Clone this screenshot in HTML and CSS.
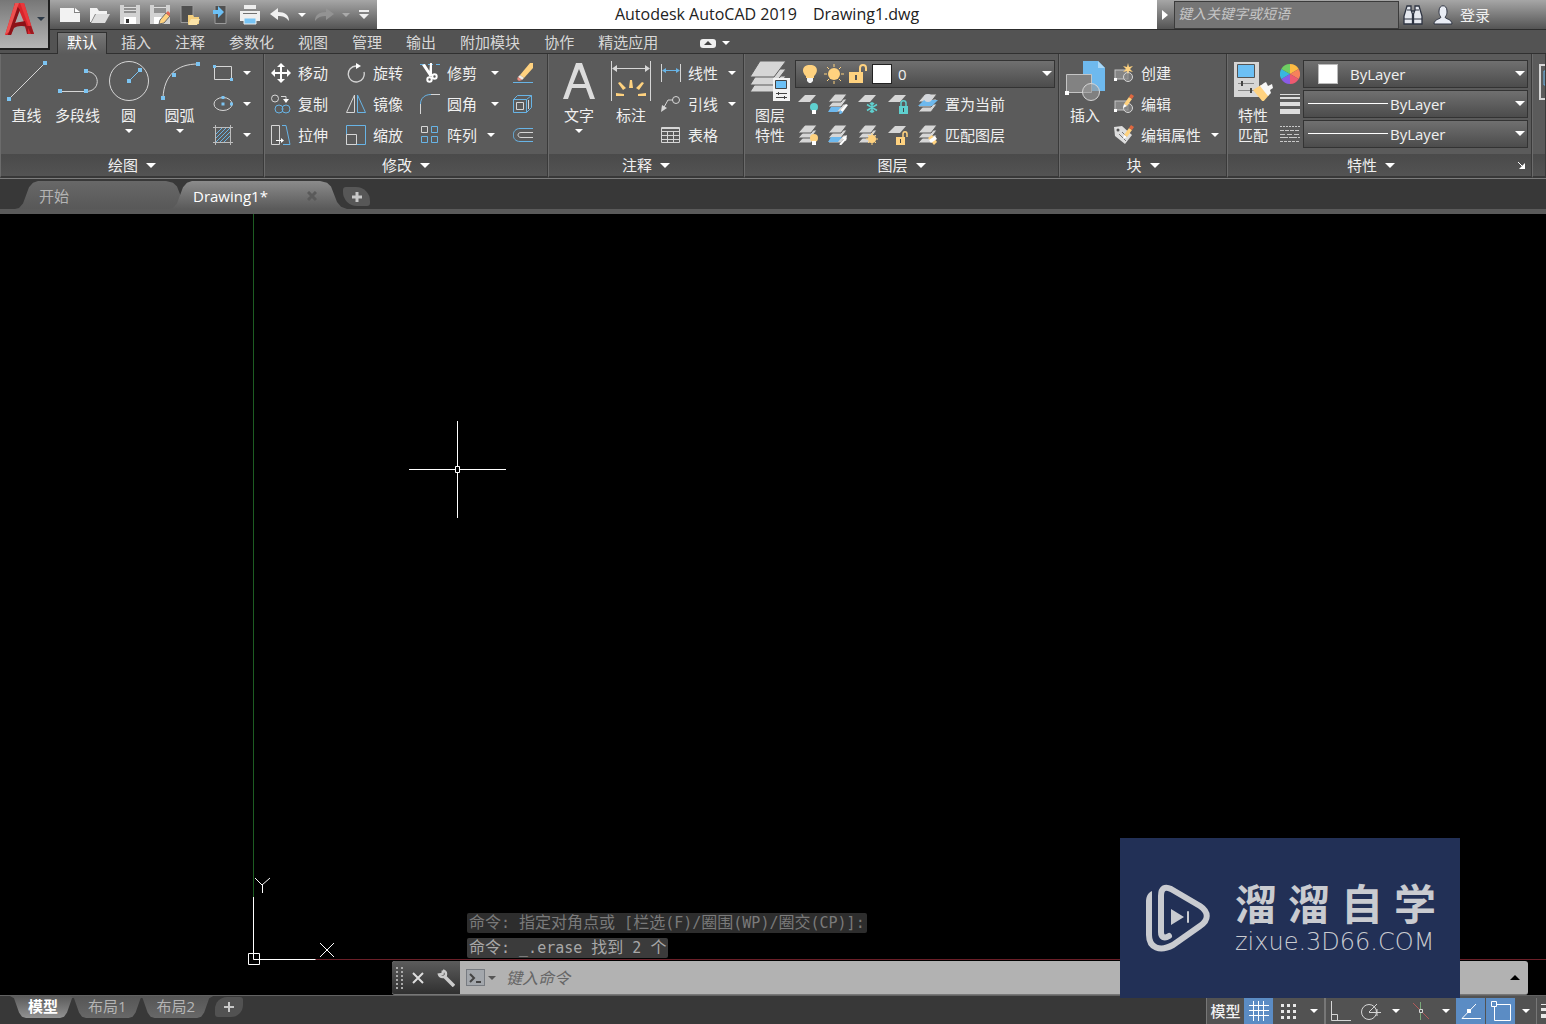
FILE: index.html
```html
<!DOCTYPE html>
<html lang="zh-CN">
<head>
  <meta charset="UTF-8" />
  <meta name="viewport" content="width=device-width, initial-scale=1.0"/>
  <title>Autodesk AutoCAD 2019 Drawing1.dwg</title>
  <link rel="stylesheet" href="styles.css">
</head>
<body>
  <svg class="symbols" aria-hidden="true">
    <symbol id="sheet" viewBox="0 0 20 20"><path fill="#d6d6d6" d="M7 1h11l-6 7H0z"/></symbol>
    <symbol id="stack" viewBox="0 0 20 20">
      <g fill="#d6d6d6" stroke="#5b5b5b"><path d="M7 10h12l-6 8H0z"/><path d="M7 5h12l-6 8H0z"/><path d="M7 0h12l-6 8H0z"/></g>
    </symbol>
    <symbol id="block" viewBox="0 0 20 20">
      <rect x="1" y="7" width="13" height="9" fill="#858585" stroke="#c4c4c4"/><circle cx="14" cy="14" r="4.5" fill="#858585" fill-opacity=".7" stroke="#d6d6d6"/><path fill="#fff" d="M0 15h3v3H0z"/>
    </symbol>
    <symbol id="pencil" viewBox="0 0 20 20">
      <path fill="#ffd27f" d="M10 10l5-7 3 2-5 7z"/><path fill="#e0673f" d="M15 3l2-3 3 2-2 3z"/><path fill="#fff" d="M10 10l3 2-4 2z"/>
    </symbol>
  </svg>

  <header class="header">
    <button class="app-menu" aria-label="应用程序菜单">
      <svg width="34" height="36" viewBox="0 0 34 36">
        <path fill="#d8232a" d="M12 2h9l10 31h-6l-3-8H11l-3 9H2z"/>
        <path fill="#a9a9a9" d="M16 9l5 12-9 1z"/>
        <path fill="#8d1218" d="M12 2l5 7-5 13 10-2 2 6c-6-2-10-1-13 1l-3 7H5z"/>
        <path fill="#ee5150" d="M12 2h4L6 31l-4 3z"/>
        <path fill="#e8383c" d="M17 2h4l7 22-2 2z"/>
        <path fill="#9c1a20" d="M22 25l6 0 3 8h-3l-3-6v6h-1z"/>
      </svg>
      <span class="caret caret-navy"></span>
    </button>

    <div class="titlebar">
      <div class="quick-access">
        <button aria-label="新建"><svg width="20" height="20"><path fill="#f2f2f2" d="M0 3h14v5h6v9H0z"/><path fill="#fff" d="M15 3l5 4h-5z"/></svg></button>
        <button aria-label="打开"><svg width="20" height="20"><path fill="#f2f2f2" d="M0 3h7l2 3h8v3H5L1 17H0z"/><path fill="#ddd" d="M6 9h14l-5 9H1z"/></svg></button>
        <button aria-label="保存"><svg width="20" height="20"><path fill="#d2d2d2" d="M0 0h20v19H0z"/><path fill="#909090" d="M4 0h12v8H4z"/><path fill="#fff" d="M4 12h12v7H4z"/><path fill="#333" d="M6 14h3v4H6z"/><path fill="#ddd" d="M4 2h12v1H4zM4 5h12v1H4z"/></svg></button>
        <button aria-label="另存为"><svg width="20" height="20"><path fill="#d2d2d2" d="M0 0h20v19H0z"/><path fill="#909090" d="M4 0h12v8H4z"/><path fill="#fff" d="M4 12h9v7H4z"/><path fill="#ddd" d="M4 2h12v1H4z"/><path fill="#ffd27f" stroke="#6a6a6a" d="M10 15l6-7 4 3-6 7-5 1z"/><path fill="#e56b54" d="M16 8l2-2 3 3-2 2z"/></svg></button>
        <button aria-label="从移动设备打开"><svg width="20" height="20"><path fill="#505050" stroke="#9b9b9b" d="M1 .5h12v17H1z"/><path fill="#f4cf7d" d="M8 10h5l1 2h5v7H8z"/><path fill="#fbe3a8" d="M11 14h9l-3 6H8z"/></svg></button>
        <button aria-label="保存到移动设备"><svg width="20" height="20"><path fill="#505050" stroke="#9b9b9b" d="M5 .5h11v18H5z"/><path fill="#6cc0f5" d="M3 5h5V1l6 6-6 6V9H3z"/></svg></button>
        <button aria-label="打印"><svg width="20" height="20"><path fill="#eee" d="M4 0h12v4H4zM0 6h20v10H0z"/><path fill="#707070" d="M3 8h14v1H3z"/><path fill="#77c4f5" stroke="#eee" d="M4 13h12v6H4z"/></svg></button>
        <button aria-label="放弃"><svg width="20" height="20"><path fill="#f0f0f0" d="M0 9l8-6v4c7 0 11 3 11 9-3-4-6-5-11-5v4z"/></svg></button>
        <button class="qa-caret" aria-label="放弃列表"><span class="caret"></span></button>
        <button aria-label="重做"><svg width="20" height="20"><path fill="#939393" d="M20 9l-8-6v4C5 7 1 10 1 16c3-4 6-5 11-5v4z"/></svg></button>
        <button class="qa-caret" aria-label="重做列表"><span class="caret caret-dim"></span></button>
        <button aria-label="自定义快速访问工具栏"><svg width="12" height="12"><path fill="#eee" d="M1 1h10v2H1zM1 5h10l-5 5z"/></svg></button>
      </div>
      <div class="doc-title"><span>Autodesk AutoCAD 2019</span><span>Drawing1.dwg</span></div>
      <form class="infocenter">
        <button type="button" class="collapse" aria-label="折叠"><svg width="6" height="10"><path fill="#fff" d="M0 0l6 5-6 5z"/></svg></button>
        <input type="text" aria-label="搜索" placeholder="键入关键字或短语">
        <button type="button" aria-label="查找"><svg width="20" height="20"><g fill="#e6e9f0" stroke="#2e3442" stroke-width="1.3"><path d="M8 6h4v5H8z"/><path d="M4 1h4v4l1.500 4v10H1V11zM16 1h-4v4l-1.500 4v10H19V11z"/></g><path stroke="#2e3442" d="M1 14h8M11 14h8M4 5h4M12 5h4"/></svg></button>
        <button type="button" class="signin"><svg width="20" height="20"><path fill="#e9edf5" stroke="#2e3442" d="M6 6c0-7 8-7 8 0 0 4-1 5-2 6 0 2 7 2 7 7H1c0-5 7-5 7-7-1-1-2-2-2-6z"/></svg>登录</button>
      </form>
    </div>

    <nav class="ribbon-tabs">
      <a href="#" class="active">默认</a>
      <a href="#">插入</a>
      <a href="#">注释</a>
      <a href="#">参数化</a>
      <a href="#">视图</a>
      <a href="#">管理</a>
      <a href="#">输出</a>
      <a href="#">附加模块</a>
      <a href="#">协作</a>
      <a href="#">精选应用</a>
      <button class="minimize" aria-label="最小化功能区"><svg width="16" height="9"><rect width="16" height="9" rx="3" fill="#eee"/><path fill="#444" d="M8 2l4 4H4z"/></svg><span class="caret"></span></button>
    </nav>
  </header>

  <main class="ribbon">
    <section class="panel panel-draw">
      <div class="panel-body">
        <button class="tool-large"><svg width="40" height="40"><path stroke="#d6d6d6" d="M2 38L38 2"/><path fill="#7cc4f2" d="M0 36h4v4H0zM36 0h4v4h-4z"/></svg>直线</button>
        <button class="tool-large"><svg width="40" height="40"><path fill="none" stroke="#d6d6d6" d="M2 30.500h26c15 0 15-20 0-20"/><path fill="#7cc4f2" d="M0 28h4v4H0zM26 28h4v4h-4zM26 8h4v4h-4z"/></svg>多段线</button>
        <button class="tool-large"><svg width="40" height="40"><circle cx="20" cy="20" r="19.500" fill="none" stroke="#d6d6d6"/><path stroke="#7cc4f2" d="M20 20L31 9"/><path fill="#7cc4f2" d="M18 18h4v4h-4zM29 7h4v4h-4z"/></svg>圆<span class="caret"></span></button>
        <button class="tool-large"><svg width="40" height="40"><path fill="none" stroke="#d6d6d6" d="M3 37C4 14 17 3 38 3"/><path fill="#7cc4f2" d="M1 35h4v4H1zM12 12h4v4h-4zM36 1h4v4h-4z"/></svg>圆弧<span class="caret"></span></button>
        <div class="tool-list">
          <div class="split"><button class="tool" aria-label="矩形"><svg width="20" height="20"><path fill="none" stroke="#d6d6d6" d="M1.500 3.500h17v13h-17z"/><path fill="#7cc4f2" d="M0 2h3v3H0zM17 15h3v3h-3z"/></svg></button><button class="more" aria-label="矩形选项"><span class="caret"></span></button></div>
          <div class="split"><button class="tool" aria-label="椭圆"><svg width="20" height="20"><ellipse cx="10" cy="10" rx="9" ry="6.500" fill="none" stroke="#d6d6d6"/><path fill="#7cc4f2" d="M8.500 2h3v3h-3zM8.500 8.500h3v3h-3zM17 8.500h3v3h-3z"/></svg></button><button class="more" aria-label="椭圆选项"><span class="caret"></span></button></div>
          <div class="split"><button class="tool" aria-label="图案填充"><svg width="20" height="20"><path stroke="#68b4e6" d="M3 9l6-6M3 13L13 3M3 17L17 3M7 17L17 7M11 17l6-6"/><path fill="none" stroke="#bdbdbd" d="M0 2.500h20M0 17.500h20M2.500 0v20M17.500 0v20"/></svg></button><button class="more" aria-label="图案填充选项"><span class="caret"></span></button></div>
        </div>
      </div>
      <button class="panel-title">绘图<span class="caret caret-big"></span></button>
    </section>

    <section class="panel panel-modify">
      <div class="panel-body">
        <div class="tool-list">
          <button class="tool"><svg width="20" height="20"><path fill="#fff" d="M10 0l4 4h-3v5h5V6l4 4-4 4v-3h-5v5h3l-4 4-4-4h3v-5H4v3l-4-4 4-4v3h5V4H6z"/></svg>移动</button>
          <button class="tool"><svg width="20" height="20"><g fill="none" stroke="#d6d6d6"><circle cx="4" cy="4.500" r="3.500"/><path d="M10 2.500h5V6"/></g><path fill="#fff" d="M12 5h6l-3 4z"/><g fill="none" stroke="#68b4e6"><circle cx="8" cy="15" r="4"/><circle cx="15" cy="15" r="4"/></g></svg>复制</button>
          <button class="tool"><svg width="20" height="20"><path fill="none" stroke="#d6d6d6" d="M.5.5h8v19h-8z"/><path fill="none" stroke="#68b4e6" d="M11 .5h4l4 19h-7"/><path stroke="#fff" d="M5 15.500h6"/><path fill="#fff" d="M10 13l3 2.500-3 2.500z"/></svg>拉伸</button>
        </div>
        <div class="tool-list">
          <button class="tool"><svg width="20" height="20"><path fill="none" stroke="#d6d6d6" stroke-width="1.300" d="M10 3a8 8 0 1 0 8 6"/><path fill="#fff" d="M10 0l5 3-5 3z"/></svg>旋转</button>
          <button class="tool"><svg width="20" height="20"><path fill="none" stroke="#d6d6d6" d="M8.500 1v17.500h-8z"/><path fill="none" stroke="#68b4e6" d="M11.500 1v17.500h8z"/></svg>镜像</button>
          <button class="tool"><svg width="20" height="20"><path fill="none" stroke="#68b4e6" d="M.5.5h19v19H.5z"/><path fill="#5b5b5b" stroke="#d6d6d6" d="M.5 9.500h10v10H.5z"/></svg>缩放</button>
        </div>
        <div class="tool-list">
          <div class="split split-wide"><button class="tool"><svg width="20" height="20"><path stroke="#68b4e6" stroke-dasharray="5 3" d="M0 1.500h20"/><path fill="#fff" d="M2 2l3-1 7 11-2 2zM10 0h2v13h-3z"/><g fill="none" stroke="#fff" stroke-width="2"><circle cx="9.500" cy="16.500" r="2.200"/><circle cx="14.500" cy="13.500" r="2.200"/></g></svg>修剪</button><button class="more" aria-label="修剪选项"><span class="caret"></span></button></div>
          <div class="split split-wide"><button class="tool"><svg width="20" height="20"><path fill="none" stroke="#68b4e6" d="M.5 10C.5 4 5 .5 11 .5"/><path stroke="#d6d6d6" d="M.5 10v10M11 .5h9"/></svg>圆角</button><button class="more" aria-label="圆角选项"><span class="caret"></span></button></div>
          <div class="split"><button class="tool"><svg width="20" height="20"><g fill="none" stroke="#68b4e6"><path d="M11.500 1.500h6v6h-6zM1.500 11.500h6v6h-6zM11.500 11.500h6v6h-6z"/><path stroke="#d6d6d6" d="M1.500 1.500h6v6h-6z"/></g></svg>阵列</button><button class="more" aria-label="阵列选项"><span class="caret"></span></button></div>
        </div>
        <div class="tool-list">
          <button class="tool" aria-label="删除"><svg width="20" height="20"><path stroke="#68b4e6" d="M0 19.500h20"/><path fill="#ffd27f" d="M7 12L17 0h3v5l-9 10z"/><path fill="#f4efe6" d="M7 12l4 3-2 2-4-3z"/><path fill="#f08d80" d="M5 14l4 3c-3 2-6 0-4-3z"/></svg></button>
          <button class="tool" aria-label="分解"><svg width="20" height="20"><g fill="none" stroke="#68b4e6"><path d="M.5 5.500h13v13H.5zM.5 5.500l4-4h14l-5 4M18.500 1.500v12l-5 5"/><path stroke="#d6d6d6" d="M3.500 8.500h7v7h-7zM15.500 6v9"/></g></svg></button>
          <button class="tool" aria-label="偏移"><svg width="20" height="20"><path fill="none" stroke="#68b4e6" d="M20 3.500H7c-9 0-9 13 0 13h13"/><path fill="none" stroke="#d6d6d6" d="M20 7.500H8c-4 0-4 5 0 5h12"/></svg></button>
        </div>
      </div>
      <button class="panel-title">修改<span class="caret caret-big"></span></button>
    </section>

    <section class="panel panel-annotate">
      <div class="panel-body">
        <button class="tool-large"><svg width="40" height="40"><path fill="#dcdcdc" d="M17 2h6l13 36h-5l-4-11H13L9 38H4zM20 8l-6 15h12z"/></svg>文字<span class="caret"></span></button>
        <button class="tool-large"><svg width="40" height="40"><path stroke="#d6d6d6" d="M.5 0v40M39.500 0v40M2 7.500h36"/><path fill="#d6d6d6" d="M1 7.500L6 4v7zM39 7.500L34 4v7z"/><path fill="#ffd27f" d="M18 27l1-8h2l1 8zM12 29l-5-7 2-1 6 6zM28 29l5-7-2-1-6 6zM13 35H5v-3l8 1zM27 35h8v-3l-8 1z"/></svg>标注</button>
        <div class="tool-list">
          <div class="split"><button class="tool"><svg width="20" height="20"><path stroke="#d6d6d6" d="M.5 1v18M19.500 1v18"/><path stroke="#68b4e6" d="M2 7.500h16"/><path fill="#68b4e6" d="M1 7.500L5 5v5zM19 7.500L15 5v5z"/></svg>线性</button><button class="more" aria-label="线性选项"><span class="caret"></span></button></div>
          <div class="split"><button class="tool"><svg width="20" height="20"><path fill="none" stroke="#d6d6d6" d="M2 15l5-9h5"/><circle cx="15" cy="6" r="3.500" fill="none" stroke="#d6d6d6"/><path fill="#d6d6d6" d="M0 18l1-7 5 3z"/></svg>引线</button><button class="more" aria-label="引线选项"><span class="caret"></span></button></div>
          <button class="tool"><svg width="20" height="20"><path fill="none" stroke="#d6d6d6" d="M.5 2.500h18v15H.5zM0 3.500h19M0 6.500h19M0 10.500h19M0 14.500h19M6.500 6v11M12.500 6v11"/></svg>表格</button>
        </div>
      </div>
      <button class="panel-title">注释<span class="caret caret-big"></span></button>
    </section>

    <section class="panel panel-layers">
      <div class="panel-body">
        <button class="tool-large"><svg width="40" height="40"><g fill="#d6d6d6" stroke="#5b5b5b"><path d="M10 15h26L24 31H0z"/><path d="M10 8h26L24 24H0z"/><path d="M10 0h26L24 16H0z"/></g><path fill="#f2f2f2" d="M23 17h17v23H23z"/><path fill="#6cc0f5" stroke="#444" d="M25.500 19.500h11v8h-11z"/><path stroke="#444" d="M26 32.500h11M26 36.500h11M28.500 31v3M34.500 35v3"/></svg><span>图层<br>特性</span></button>
        <div class="layer-tools">
          <div class="combo combo-layer">
            <select id="layer" aria-label="图层"><option>0</option></select>
            <span class="layer-state">
              <svg width="20" height="20"><path fill="#ffd27f" d="M10 1c9 0 8 8 4 11v2H6v-2C2 9 1 1 10 1z"/><path fill="#f4f4f4" d="M7 14h6v3l-2 2H9l-2-2z"/></svg>
              <svg width="20" height="20"><circle cx="10" cy="10" r="6" fill="#ffd27f"/><path stroke="#ffd27f" d="M10 0v3M10 17v3M0 10h3M17 10h3M3 3l2 2M15 15l2 2M3 17l2-2M15 5l2-2"/></svg>
              <svg width="20" height="20"><path fill="#ffd27f" d="M1 8h14v11H1z"/><path fill="none" stroke="#ffd27f" stroke-width="2" d="M12 9V4c0-4 6-4 6 0v3"/><path fill="#555" d="M7 11h2v5H7z"/></svg>
              <span class="swatch"></span>
            </span>
          </div>
          <div class="layer-row">
            <button class="tool" aria-label="关"><svg width="20" height="20"><use href="#sheet"/><circle cx="16" cy="13" r="4" fill="#5fd0cf"/><path fill="#fff" d="M14 16h4v4h-4z"/></svg></button>
            <button class="tool" aria-label="隔离"><svg width="20" height="20"><use href="#stack"/><path fill="#6eb9ee" d="M3 13h10l-4 5H0z"/><path fill="#fff" d="M18 10l2 1-6 8-2-2z"/><path fill="#6eb9ee" d="M12 16l3 2-2 2h-2z"/></svg></button>
            <button class="tool" aria-label="冻结"><svg width="20" height="20"><use href="#sheet"/><path stroke="#5fd0cf" fill="none" stroke-width="1.500" d="M14 8v11M9 10.500l10 6M9 16.500l10-6M12 9l2 2 2-2M12 18l2-2 2 2"/></svg></button>
            <button class="tool" aria-label="锁定"><svg width="20" height="20"><use href="#sheet"/><path fill="#5fd0cf" d="M11 12h9v8h-9z"/><path fill="none" stroke="#5fd0cf" stroke-width="1.500" d="M13 12V9c0-3 5-3 5 0v3"/><path fill="#444" d="M15 14h1v4h-1z"/></svg></button>
            <button class="tool"><svg width="20" height="20"><use href="#stack"/><path fill="#6eb9ee" d="M6 6h14l-6 6H0z"/><circle cx="10" cy="4" r="4" fill="#d4d7dc"/></svg>置为当前</button>
          </div>
          <div class="layer-row">
            <button class="tool" aria-label="打开所有图层"><svg width="20" height="20"><use href="#stack"/><circle cx="16" cy="13" r="4" fill="#ffd27f"/><path fill="#fff" d="M14 16h4v4h-4z"/></svg></button>
            <button class="tool" aria-label="取消隔离"><svg width="20" height="20"><use href="#stack"/><path fill="#6eb9ee" d="M3 12h11l-4 5H0z"/><path stroke="#fff" stroke-width="2" d="M12 20l6-7"/><path fill="#fff" d="M19 10l-1 6-4-3z"/></svg></button>
            <button class="tool" aria-label="解冻所有图层"><svg width="20" height="20"><use href="#stack"/><circle cx="14" cy="14" r="4" fill="#ffd27f"/><path stroke="#ffd27f" d="M14 8v12M8 14h12M10 10l8 8M10 18l8-8"/></svg></button>
            <button class="tool" aria-label="解锁"><svg width="20" height="20"><use href="#sheet"/><path fill="#ffd27f" d="M8 12h9v8H8z"/><path fill="none" stroke="#ffd27f" stroke-width="1.500" d="M15 12V9c0-3 4-3 4 0v3"/><path fill="#444" d="M12 14h1v4h-1z"/></svg></button>
            <button class="tool"><svg width="20" height="20"><use href="#stack"/><path fill="#ffd27f" d="M10 13l4-3 5 7-3 3z"/><path fill="#fff" d="M11 15l6-4 2 3-6 4z"/></svg>匹配图层</button>
          </div>
        </div>
      </div>
      <button class="panel-title">图层<span class="caret caret-big"></span></button>
    </section>

    <section class="panel panel-block">
      <div class="panel-body">
        <button class="tool-large"><svg width="40" height="40"><path fill="#6eb9ee" d="M18 0h15l7 7v23H18z"/><path fill="#a9d8f7" d="M33 0v7h7z"/><path fill="#828282" stroke="#c4c4c4" d="M1.500 13.500h25v18h-25z"/><circle cx="26" cy="31" r="8.500" fill="#999" fill-opacity=".6" stroke="#d6d6d6"/><path fill="#fff" d="M0 30h4v4H0z"/></svg>插入</button>
        <div class="tool-list">
          <button class="tool"><svg width="20" height="20"><use href="#block"/><path fill="#ffd27f" d="M14 0l1 4 4-1-3 3 3 3-4-1-1 3-1-3-4 1 3-3-3-3 4 1z"/></svg>创建</button>
          <button class="tool"><svg width="20" height="20"><use href="#block"/><use href="#pencil"/></svg>编辑</button>
          <div class="split"><button class="tool"><svg width="20" height="20"><path fill="#dedede" d="M0 2l8-1 10 9-7 9L1 11z"/><path stroke="#777" d="M5 9l7 7M8 7l5 5"/><circle cx="4" cy="5" r="1.500" fill="#555"/><use href="#pencil"/></svg>编辑属性</button><button class="more" aria-label="编辑属性选项"><span class="caret"></span></button></div>
        </div>
      </div>
      <button class="panel-title">块<span class="caret caret-big"></span></button>
    </section>

    <section class="panel panel-props">
      <div class="panel-body">
        <button class="tool-large"><svg width="40" height="40"><path fill="#d6d6d6" d="M1 1h25v35H1z"/><path fill="#6cc0f5" stroke="#555" d="M4.500 3.500h17v13h-17z"/><path stroke="#888" d="M5 22.500h16M5 29.500h16"/><path fill="#444" d="M8 20h2v5H8zM17 27h2v5h-2z"/><path fill="#ffd27f" d="M20 29l8-5 8 10-6 7z"/><path fill="#f6f6f6" d="M27 25l4-3 2-1 2 4 4-2 1 4-3 2 1 3-3 3z"/></svg><span>特性<br>匹配</span></button>
        <div class="props-grid">
          <label for="color" aria-label="对象颜色"><svg width="20" height="20" viewBox="-10 -10 20 20"><path fill="#fdbb43" d="M0 0V-10A10 10 0 0 1 8.700-5z"/><path fill="#f7825b" d="M0 0L8.700-5A10 10 0 0 1 8.700 5z"/><path fill="#ee5a70" d="M0 0L8.700 5A10 10 0 0 1 0 10z"/><path fill="#8a5be8" d="M0 0V10A10 10 0 0 1-8.700 5z"/><path fill="#38b7e0" d="M0 0L-8.700 5A10 10 0 0 1-8.700-5z"/><path fill="#6fce62" d="M0 0L-8.700-5A10 10 0 0 1 0-10z"/></svg></label>
          <div class="combo combo-color">
            <select id="color"><option>ByLayer</option></select>
            <span class="swatch"></span>
          </div>
          <label for="weight" aria-label="线宽"><svg width="20" height="20"><path fill="#dcdcdc" d="M0 0h20v1H0zM0 3h20v2H0zM0 8h20v4H0zM0 15h20v5H0z"/></svg></label>
          <div class="combo combo-line">
            <select id="weight"><option>ByLayer</option></select>
            <span class="line-sample"></span>
          </div>
          <label for="linetype" aria-label="线型"><svg width="20" height="20"><g stroke="#c9c9c9"><path stroke-dasharray="2 1" d="M0 2.500h20"/><path stroke-dasharray="4 1" d="M0 6.500h20"/><path stroke-dasharray="5 2" d="M0 10.500h20"/><path stroke-dasharray="8 1" d="M0 13.500h20"/><path stroke-dasharray="3 1" d="M0 17.500h20"/></g></svg></label>
          <div class="combo combo-line">
            <select id="linetype"><option>ByLayer</option></select>
            <span class="line-sample"></span>
          </div>
        </div>
      </div>
      <div class="panel-foot">
        <button class="panel-title">特性<span class="caret caret-big"></span></button>
        <button class="launcher" aria-label="特性设置"><svg width="7" height="7"><path stroke="#fff" d="M0 0l5 5"/><path fill="#fff" d="M7 1v6H1z"/></svg></button>
      </div>
    </section>

    <section class="panel panel-group">
      <div class="panel-body">
        <button class="tool-large" aria-label="组"><svg width="40" height="40"><path fill="none" stroke="#d6d6d6" stroke-width="2" d="M10 4H1v34h9"/><path fill="#686868" stroke="#68b4e6" d="M5 10h20v14H5z"/></svg></button>
      </div>
      <div class="panel-title"></div>
    </section>
  </main>

  <div class="file-tabs">
    <button class="file-tab">开始</button>
    <button class="file-tab active">Drawing1*<svg width="10" height="10"><path stroke="#5a5a5a" stroke-width="3" d="M1 1l8 8M9 1L1 9"/></svg></button>
    <button class="add-tab" aria-label="新图形"><svg width="12" height="12"><path stroke="#c8c8c8" stroke-width="3" d="M6 1v10M1 6h10"/></svg></button>
  </div>

  <div class="canvas">
    <div class="axis-y"></div>
    <div class="axis-x"></div>
    <svg class="crosshair" width="97" height="97"><path stroke="#fff" d="M48.500 0v45M48.500 52v45M0 48.500h46M51 48.500h46"/><path fill="none" stroke="#fff" d="M46.500 45.500h4v6h-4z"/></svg>
    <svg class="ucs" width="90" height="90"><g fill="none" stroke="#fff"><path d="M.5 76.500h11v11H.5zM5.500 20v62.500h62"/><path d="M7 1l7 7 8-7M14.500 8v8M72 66l14 14M86 66L72 80"/></g></svg>

    <div class="command">
      <p class="history history-old"><span>命令</span>: <span>指定对角点或</span> [<span>栏选</span>(F)/<span>圈围</span>(WP)/<span>圈交</span>(CP)]:</p>
      <p class="history"><span>命令</span>: _.erase <span>找到</span> 2 <span>个</span></p>
      <div class="command-line">
        <div class="command-tools">
          <svg width="8" height="22"><path stroke="#aaa" stroke-width="2" stroke-dasharray="2 2" d="M1 0v22M6 0v22"/></svg>
          <button aria-label="关闭"><svg width="12" height="12"><path stroke="#ddd" stroke-width="2" d="M1 1l10 10M11 1L1 11"/></svg></button>
          <button class="customize" aria-label="自定义"><svg width="18" height="18"><path fill="none" stroke="#ccc" stroke-width="3.500" d="M7 7l10 10"/><path fill="none" stroke="#ccc" stroke-width="2.500" d="M6 1.500L5.500 5 2 5.500C3 9 9 9 9 5 9 3 8 2 6 1.500"/></svg></button>
        </div>
        <button class="prompt" aria-label="最近使用的命令"><svg width="19" height="17"><rect x=".5" y=".5" width="18" height="16" fill="#a3a7ac" stroke="#777b81"/><path fill="none" stroke="#444" stroke-width="2" d="M4 5l4 4-4 4M10 13h5"/></svg><span class="caret caret-dark"></span></button>
        <input type="text" aria-label="命令" placeholder="键入命令">
        <button class="expand" aria-label="展开历史"><svg width="10" height="5"><path d="M5 0l5 5H0z"/></svg></button>
      </div>
    </div>
  </div>

  <footer class="status">
    <div class="layout-tabs">
      <button class="layout-tab active">模型</button>
      <button class="layout-tab">布局1</button>
      <button class="layout-tab">布局2</button>
      <button class="add-layout" aria-label="新建布局"><svg width="10" height="10"><path stroke="#c8c8c8" stroke-width="2" d="M5 0v10M0 5h10"/></svg></button>
    </div>
    <div class="status-tools">
      <button class="space">模型</button>
      <button class="on" aria-label="栅格"><svg width="20" height="20"><path stroke="#fff" d="M0 4.500h20M0 9.500h20M0 14.500h20M4.500 0v20M9.500 0v20M14.500 0v20"/></svg></button>
      <button aria-label="捕捉"><svg width="20" height="20"><g stroke="#e8e8e8" stroke-width="3" stroke-dasharray="3 3"><path d="M2 4.500h15M2 10.500h15M2 16.500h15"/></g></svg></button>
      <button class="arrow" aria-label="捕捉设置"><span class="caret"></span></button>
      <span class="divider"></span>
      <button aria-label="正交"><svg width="20" height="20"><path fill="none" stroke="#d6d6d6" d="M.5 0v19.500H20M.5 13.500h6v6"/></svg></button>
      <button aria-label="极轴"><svg width="20" height="20"><circle cx="8" cy="11" r="7.500" fill="none" stroke="#d6d6d6"/><path stroke="#d6d6d6" d="M8 11.500h12M8 11l8-8M16 8v7"/></svg></button>
      <button class="arrow" aria-label="极轴设置"><span class="caret"></span></button>
      <button aria-label="等轴测"><svg width="20" height="20"><path stroke="#b25a5a" d="M2 2l16 16"/><path stroke="#79a879" d="M9.500 1v18"/><path fill="#525252" stroke="#d6d6d6" d="M8.500 8.500h3v3h-3z"/></svg></button>
      <button class="arrow" aria-label="等轴测设置"><span class="caret"></span></button>
      <button class="on" aria-label="对象捕捉追踪"><svg width="20" height="20"><path fill="none" stroke="#fff" d="M15 3L1 17.500h19"/><path fill="#fff" d="M6 8h4v4H6z"/></svg></button>
      <button class="on" aria-label="对象捕捉"><svg width="20" height="20"><path fill="none" stroke="#fff" d="M3.500 3.500h16v16h-16z"/><path fill="#5b8cc4" stroke="#fff" d="M.5.5h5v5h-5z"/></svg></button>
      <button class="arrow" aria-label="对象捕捉设置"><span class="caret"></span></button>
      <button class="lineweight" aria-label="线宽显示"><svg width="6" height="16"><path fill="#e8e8e8" d="M0 1h6v1H0zM0 5h6v3H0zM0 11h6v4H0z"/></svg></button>
    </div>
  </footer>

  <aside class="watermark">
    <svg width="66" height="68" viewBox="0 0 66 68">
      <g fill="none" stroke="#c9cbd0" stroke-linecap="round" stroke-linejoin="round"><path stroke-width="6" d="M23 52c-5 3-8 1-8-4V12c0-8 4-10 10-7l29 17c9 6 9 14 0 20L27 61C14 68 3 64 3 51V18"/><path stroke-width="2" d="M42 28v10"/></g>
      <path fill="#c9cbd0" d="M0 18c0-6 2-9 6-11v12zM25 25l13 8-13 8z"/>
    </svg>
    <div>
      <div class="watermark-name"><span>溜</span><span>溜</span><span>自</span><span>学</span></div>
      <div class="watermark-url">zixue.3D66.COM</div>
    </div>
  </aside>
</body>
</html>
```
FILE: styles.css
```css
* {
  box-sizing: border-box;
}

body {
  margin: 0;
  height: 100vh;
  display: flex;
  flex-direction: column;
  position: relative;
  overflow: hidden;
  background: #383838;
  color: #f0f0f0;
  font-family: "Open Sans", "Noto Sans CJK SC", sans-serif;
  font-size: 15px;
  line-height: 20px;
}

button, input, select {
  font: inherit;
  color: inherit;
  margin: 0;
  padding: 0;
  border: none;
  background: none;
}

button {
  cursor: pointer;
  white-space: nowrap;
}

svg {
  display: block;
  flex: none;
}

.symbols {
  position: absolute;
  width: 0;
  height: 0;
}

.caret {
  display: block;
  flex: none;
  border: 4px solid transparent;
  border-top-color: #fff;
  border-bottom: none;
}

.caret-big {
  border-width: 5px;
  border-bottom: none;
}

.caret-dim {
  border-top-color: #aaa;
}

.caret-navy {
  border-top-color: #2d3a48;
}

.caret-dark {
  border-top-color: #555;
}

/* title bar and ribbon tabs */
.header {
  display: grid;
  grid-template-columns: 50px 1fr;
  grid-template-rows: 30px 24px;
  flex: none;
  background: #535353;
  border-bottom: 1px solid #303030;
  height: 54px;
}

.app-menu {
  grid-row: 1 / 3;
  display: flex;
  align-items: center;
  height: 50px;
  padding: 0 2px 10px 3px;
  background: linear-gradient(#777, #b5b5b5);
  border: 1px solid #1f1f1f;
  border-width: 0 2px 2px 0;
}

.titlebar {
  display: flex;
  background: linear-gradient(#a6a6a6, #545454);
  border-bottom: 1px solid #2c2c2c;
}

.quick-access {
  display: flex;
  align-items: center;
  gap: 10px;
  padding: 0 7px 0 10px;
}

.quick-access .qa-caret {
  margin: 0 -2px;
}

.doc-title {
  flex: 1;
  display: flex;
  justify-content: center;
  align-items: center;
  gap: 16px;
  padding-bottom: 2px;
  background: #fff;
  color: #222;
  font-size: 16px;
  white-space: nowrap;
}

.infocenter {
  display: flex;
  align-items: center;
  gap: 10px;
  width: 389px;
}

.infocenter input {
  width: 225px;
  height: 28px;
  margin: 0 -6px 0 -10px;
  padding: 0 3px 3px;
  border: 1px solid #3b3b3b;
  background: #757575;
  font-size: 14px;
}

.infocenter input::placeholder {
  color: #c6c6c6;
  font-style: italic;
  opacity: 1;
}

.collapse {
  width: 17px;
  padding-left: 5px;
}

.signin {
  display: flex;
  align-items: center;
  gap: 7px;
}

.ribbon-tabs {
  display: flex;
  gap: 4px;
  padding: 2px 0 0 7px;
}

.ribbon-tabs a {
  padding: 0 10px;
  color: #d8d8d8;
  text-decoration: none;
  white-space: nowrap;
}

.ribbon-tabs .active {
  padding: 0 9px;
  line-height: 18px;
  color: #fff;
  background: linear-gradient(#777, #5b5b5b);
  border: 1px solid #303030;
  border-bottom: none;
}

.minimize {
  display: flex;
  align-items: center;
  gap: 6px;
  margin-left: 28px;
}

/* ribbon */
.ribbon {
  display: grid;
  grid-template-columns: 264px 284px 196px 315px 168px 305px minmax(0, 1fr);
  flex: none;
  height: 125px;
  background: #5b5b5b;
  border-bottom: 1px solid #7c7c7c;
  overflow: hidden;
}

.panel {
  display: flex;
  flex-direction: column;
  border-left: 1px solid #6b6b6b;
  border-right: 1px solid #3a3a3a;
  border-bottom: 2px solid #383838;
  overflow: hidden;
}

.panel-body {
  flex: 1;
  display: flex;
  align-items: flex-start;
}

.panel-title {
  display: flex;
  justify-content: center;
  align-items: center;
  gap: 8px;
  width: 100%;
  height: 22px;
  background: linear-gradient(#4a4a4a, #535353);
}

.panel-foot {
  display: flex;
  background: linear-gradient(#4a4a4a, #535353);
}

.panel-foot .panel-title {
  background: none;
}

.launcher {
  width: 18px;
  padding-left: 4px;
}

.tool-large {
  display: flex;
  flex-direction: column;
  align-items: center;
  gap: 4px;
  width: 50px;
  padding-top: 7px;
}

.tool-list {
  padding-top: 3px;
}

.tool {
  display: flex;
  align-items: center;
  gap: 7px;
  height: 31px;
}

.split {
  display: flex;
  align-items: center;
  gap: 10px;
}

.split-wide {
  gap: 14px;
}

.more {
  height: 20px;
}

.panel-draw .tool-large {
  width: 51px;
}

.panel-draw .tool-list {
  padding-left: 8px;
}

.panel-modify .panel-body {
  display: grid;
  grid-template-columns: 75px 74px 93px 20px;
  padding-left: 6px;
}

.panel-annotate .panel-body {
  padding-left: 4px;
}

.panel-annotate .tool-large {
  width: 52px;
}

.panel-annotate .tool-list,
.panel-block .tool-list {
  padding-left: 4px;
}

.layer-tools {
  padding-top: 6px;
}

.layer-row {
  display: flex;
  gap: 10px;
  padding-left: 3px;
}

.panel-props .panel-body {
  gap: 2px;
}

.props-grid {
  display: grid;
  grid-template-columns: 23px 225px;
  align-items: center;
  row-gap: 2px;
  padding-top: 6px;
}

.panel-group .tool-large {
  margin-left: 6px;
}

.combo {
  position: relative;
  background: linear-gradient(#707070, #4c4c4c);
  border: 1px solid #333;
}

.combo::after {
  content: "";
  position: absolute;
  right: 2px;
  top: 10px;
  border: 5px solid transparent;
  border-top-color: #fff;
  border-bottom: none;
  pointer-events: none;
}

.combo select {
  display: block;
  width: 100%;
  height: 26px;
  appearance: none;
}

.combo-layer {
  width: 260px;
}

.combo-layer select {
  padding-left: 102px;
}

.layer-state {
  position: absolute;
  left: 4px;
  top: 3px;
  display: flex;
  gap: 4px;
  pointer-events: none;
}

.swatch {
  width: 20px;
  height: 20px;
  background: #fff;
  border: 1px solid #222;
}

.combo-color .swatch {
  position: absolute;
  left: 14px;
  top: 3px;
  border-color: #bbb;
}

.combo-color select {
  padding-left: 46px;
}

.combo-line select {
  padding-left: 86px;
}

.line-sample {
  position: absolute;
  left: 4px;
  top: 12px;
  width: 80px;
  height: 1px;
  background: #fff;
}

/* drawing tabs */
.file-tabs {
  display: flex;
  align-items: flex-end;
  flex: none;
  height: 35px;
  padding-left: 15px;
  border-bottom: 5px solid #5a5a5a;
  background: #383838;
}

.file-tab {
  display: flex;
  align-items: center;
  justify-content: space-between;
  width: 178px;
  height: 28px;
  padding: 2px 30px 0 24px;
  color: #b4b4b4;
  background: linear-gradient(#686868, #585858);
  clip-path: polygon(0 100%, 4px 96%, 8px 80%, 14px 22%, 18px 6%, 23px 0, calc(100% - 27px) 0, calc(100% - 20px) 6%, calc(100% - 16px) 20%, calc(100% - 10px) 75%, calc(100% - 6px) 92%, 100% 100%);
}

.file-tab.active {
  margin-left: -24px;
  color: #fff;
  background: linear-gradient(#8b8b8b, #5a5a5a);
}

.add-tab {
  display: flex;
  align-items: center;
  justify-content: center;
  width: 27px;
  height: 19px;
  margin: 0 0 3px -4px;
  background: #575757;
  border-radius: 3px 14px 3px 14px;
}

/* model space */
.canvas {
  flex: 1;
  position: relative;
  background: #000;
  overflow: hidden;
}

.axis-y {
  position: absolute;
  left: 253px;
  top: 0;
  bottom: 36px;
  width: 1px;
  background: #1d5c22;
}

.axis-x {
  position: absolute;
  left: 253px;
  right: 0;
  bottom: 35px;
  height: 1px;
  background: #6a1f28;
}

.crosshair {
  position: absolute;
  left: 409px;
  top: 207px;
}

.ucs {
  position: absolute;
  left: 248px;
  bottom: 28px;
}

.command {
  position: absolute;
  left: 392px;
  right: 18px;
  bottom: 0;
  display: flex;
  flex-direction: column;
  align-items: flex-start;
}

.history {
  margin: 0 0 5px 75px;
  padding: 0 2px;
  height: 20px;
  color: #a8a8a8;
  background: #3b3b3b;
  border-radius: 2px;
  font-family: "DejaVu Sans Mono", "Noto Sans CJK SC", monospace;
  white-space: nowrap;
}

.history:nth-child(2) {
  margin-bottom: 3px;
}

.history span {
  font-size: 16px;
}

.history-old {
  color: #7a7a7a;
  background: #2d2d2d;
}

.command-line {
  display: flex;
  align-items: stretch;
  width: 100%;
  height: 34px;
  background: #b2b2b2;
  border-bottom: 1px solid #777;
  border-radius: 3px;
  overflow: hidden;
}

.command-tools {
  display: flex;
  align-items: center;
  gap: 8px;
  width: 68px;
  padding: 0 5px 0 4px;
  background: linear-gradient(#5c5c5c, #303030);
}

.customize {
  margin-left: auto;
}

.prompt {
  display: flex;
  align-items: center;
  gap: 3px;
  padding: 0 10px 0 6px;
}

.command-line input {
  flex: 1;
  font-size: 16px;
}

.command-line input::placeholder {
  color: #666;
  font-style: italic;
  opacity: 1;
}

.expand {
  padding: 0 8px;
}

/* status bar */
.status {
  display: flex;
  justify-content: space-between;
  flex: none;
  height: 29px;
  border-top: 1px solid #626262;
  background: #383838;
}

.layout-tabs {
  display: flex;
  padding-left: 10px;
}

.layout-tab {
  height: 22px;
  padding: 0 18px 2px;
  color: #b4b4b4;
  background: linear-gradient(#555, #686868);
  clip-path: polygon(0 0, 100% 0, calc(100% - 4px) 10%, calc(100% - 9px) 75%, calc(100% - 12px) 94%, calc(100% - 16px) 100%, 16px 100%, 12px 94%, 9px 75%, 4px 10%);
}

.layout-tab + .layout-tab {
  margin-left: -6px;
}

.layout-tab.active {
  color: #fff;
  font-weight: bold;
  background: linear-gradient(#5a5a5a, #929292);
}

.add-layout {
  display: flex;
  align-items: center;
  justify-content: center;
  width: 28px;
  height: 20px;
  margin: 1px 0 0 2px;
  background: #525252;
  border-radius: 12px 3px 12px 3px;
}

.status-tools {
  display: flex;
  align-items: stretch;
  padding-top: 2px;
  background: #525252;
  border-left: 1px solid #777;
}

.status-tools button {
  display: flex;
  align-items: center;
  justify-content: center;
  width: 30px;
}

.status-tools .space {
  width: 37px;
  font-weight: 500;
}

.status-tools .on {
  background: #5b8cc4;
  border-right: 1px solid #525252;
}

.status-tools .arrow {
  width: 20px;
}

.status-tools .lineweight {
  width: 10px;
  padding-left: 4px;
  border-left: 1px solid #777;
}

.divider {
  width: 2px;
  background: #777;
}

/* site badge over the drawing */
.watermark {
  position: absolute;
  right: 86px;
  bottom: 26px;
  display: flex;
  align-items: center;
  gap: 23px;
  width: 340px;
  height: 160px;
  padding-left: 26px;
  background: #223056;
  color: #c9cbd0;
}

.watermark-name {
  display: flex;
  gap: 11px;
  font-size: 42px;
  line-height: 48px;
  font-weight: bold;
}

.watermark-url {
  font-family: "DejaVu Sans", sans-serif;
  font-size: 24px;
  font-weight: 200;
  line-height: 28px;
}
```
